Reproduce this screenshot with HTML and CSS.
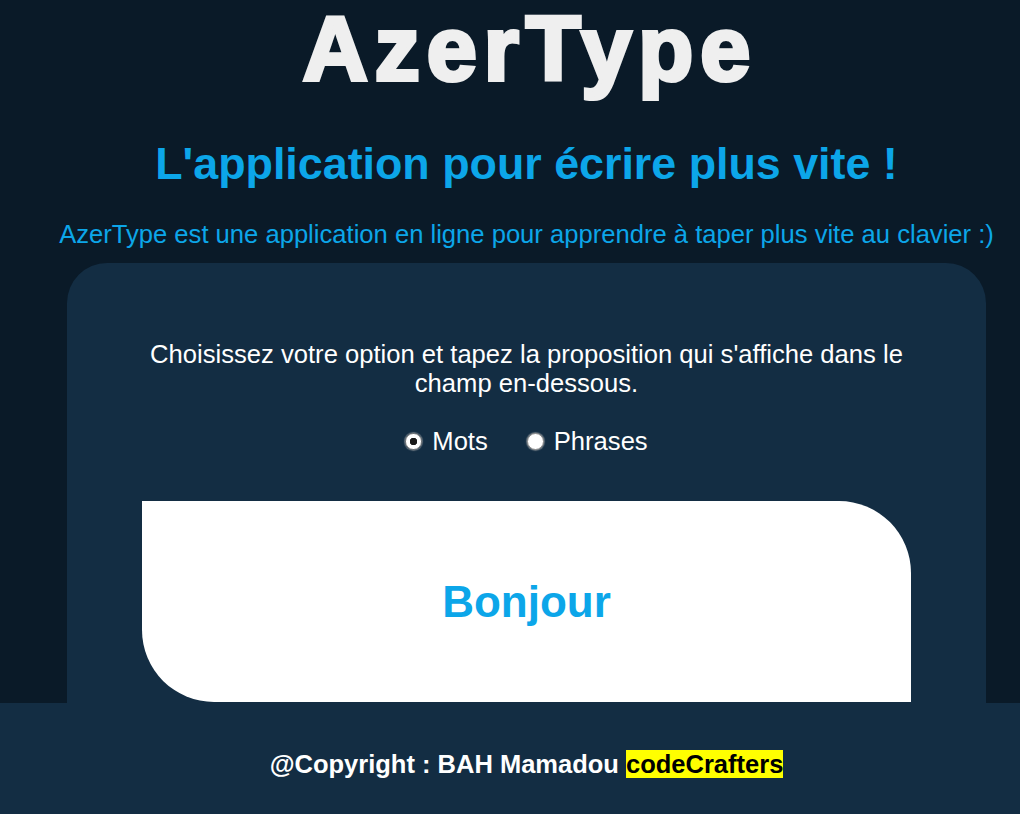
FILE: index.html
```html
<!DOCTYPE html>
<html lang="fr">
<head>
<meta charset="utf-8">
<title>AzerType</title>
<link rel="stylesheet" href="styles.css">
</head>
<body>
<div class="page">
  <header class="header">
    <h1 class="logo">AzerType</h1>
    <h2 class="subtitle">L'application pour écrire plus vite !</h2>
    <p class="intro">AzerType est une application en ligne pour apprendre à taper plus vite au clavier :)</p>
  </header>
  <main class="card">
    <p class="instructions">Choisissez votre option et tapez la proposition qui s'affiche dans le champ en-dessous.</p>
    <div class="options">
      <label class="option"><input type="radio" name="mode" value="mots" checked><span>Mots</span></label>
      <label class="option"><input type="radio" name="mode" value="phrases"><span>Phrases</span></label>
    </div>
    <div class="proposal">
      <span class="word">Bonjour</span>
    </div>
  </main>
</div>
<footer class="footer">
  <p class="copyright">@Copyright : BAH Mamadou <span class="brand">codeCrafters</span></p>
</footer>
</body>
</html>
```

FILE: styles.css
```css
* { box-sizing: border-box; }

html, body {
  margin: 0;
  padding: 0;
}

body {
  background: #0a1a28;
  font-family: "Liberation Sans", Arial, sans-serif;
  overflow: hidden;
}

.page {
  padding-left: 33px;
}

.header {
  text-align: center;
  padding-top: 4px;
}

.logo {
  margin: 0;
  font-size: 90px;
  line-height: 90px;
  font-weight: 700;
  color: #efefef;
  letter-spacing: 7px;
  -webkit-text-stroke: 4px #efefef;
  padding-left: 7px;
}

.subtitle {
  margin: 44px 0 0;
  font-size: 44.8px;
  font-weight: 700;
  color: #0ca6e9;
}

.intro {
  margin: 31px 0 0;
  font-size: 25.6px;
  color: #0ca6e9;
}

.card {
  margin: 14px 34px 0;
  background: #132d43;
  border-radius: 40px 40px 0 0;
  padding: 77px 75px 1px;
  color: #ffffff;
  text-align: center;
}

.instructions {
  margin: 0;
  font-size: 25.6px;
}

.options {
  margin-top: 29px;
  display: flex;
  justify-content: center;
  gap: 39px;
  font-size: 25.6px;
}

.option {
  display: flex;
  align-items: center;
  gap: 10px;
}

.option input {
  appearance: none;
  -webkit-appearance: none;
  margin: 0;
  width: 17px;
  height: 17px;
  border-radius: 50%;
  background: #ffffff;
  border: 1px solid #8a8a8a;
  box-shadow: 0 0 1px 1px rgba(180,180,180,0.5);
}

.option input:checked {
  background: radial-gradient(circle, #1a1a1a 0 3.5px, #ffffff 4px);
}

.proposal {
  margin-top: 45px;
  height: 201px;
  background: #ffffff;
  border-radius: 0 72px 0 72px;
  display: flex;
  align-items: center;
  justify-content: center;
}

.word {
  font-size: 44px;
  font-weight: 700;
  color: #0ca6e9;
}

.footer {
  background: #132d43;
  padding: 47px 0 35px 33px;
  text-align: center;
}

.copyright {
  margin: 0;
  font-size: 25.5px;
  font-weight: 700;
  color: #ffffff;
}

.brand {
  background: #ffff00;
  color: #000000;
}
```
